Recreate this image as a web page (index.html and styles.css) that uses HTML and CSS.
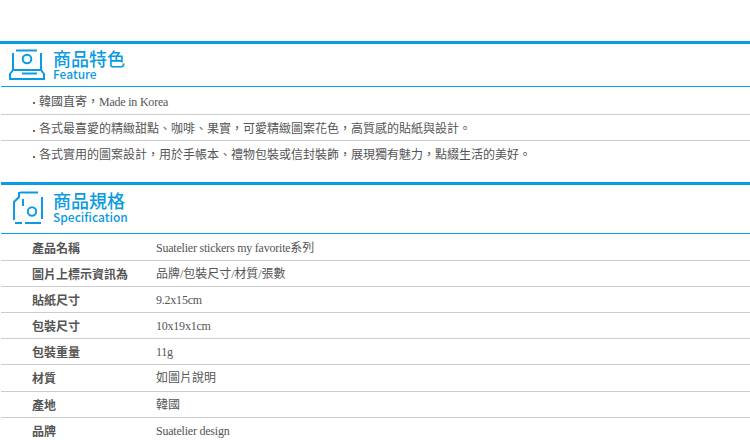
FILE: index.html
```html
<!DOCTYPE html>
<html lang="zh-Hant">
<head>
<meta charset="utf-8">
<title>商品特色</title>
<link rel="stylesheet" href="styles.css">
</head>
<body>
<section class="section feature">
  <header class="head">
    <svg class="icon" width="38" height="36" viewBox="0 0 38 36" fill="none" stroke="#0a9be0" stroke-width="2">
      <path d="M8 3.500H29M5 6V23M33 6V23M5 23H33M14 26.500H29"/>
      <circle cx="19" cy="12" r="4.300"/>
      <path d="M5 23L2 27V32H36V27L33 23"/>
    </svg>
    <div class="titles">
      <h2>商品特色</h2>
      <p>Feature</p>
    </div>
  </header>
  <ul class="points">
    <li>韓國直寄，<span class="lat">Made in Korea</span></li>
    <li>各式最喜愛的精緻甜點、咖啡、果實，可愛精緻圖案花色，高質感的貼紙與設計。</li>
    <li>各式實用的圖案設計，用於手帳本、禮物包裝或信封裝飾，展現獨有魅力，點綴生活的美好。</li>
  </ul>
</section>
<section class="section spec">
  <header class="head">
    <svg class="icon" width="36" height="38" viewBox="0 0 36 38" fill="none" stroke="#0a9be0" stroke-width="2">
      <path d="M10 3.500H28M9 3V8L4 13V31M13 10V17M32 8V30M5 34H12M15 34H31"/>
      <circle cx="22" cy="22.500" r="4.200"/>
    </svg>
    <div class="titles">
      <h2>商品規格</h2>
      <p>Specification</p>
    </div>
  </header>
  <dl class="specs">
    <div class="row"><dt>產品名稱</dt><dd><span class="lat">Suatelier stickers my favorite</span>系列</dd></div>
    <div class="row"><dt>圖片上標示資訊為</dt><dd>品牌<span class="lat">/</span>包裝尺寸<span class="lat">/</span>材質<span class="lat">/</span>張數</dd></div>
    <div class="row"><dt>貼紙尺寸</dt><dd><span class="lat">9.2x15cm</span></dd></div>
    <div class="row"><dt>包裝尺寸</dt><dd><span class="lat">10x19x1cm</span></dd></div>
    <div class="row"><dt>包裝重量</dt><dd><span class="lat">11g</span></dd></div>
    <div class="row"><dt>材質</dt><dd>如圖片說明</dd></div>
    <div class="row"><dt>產地</dt><dd>韓國</dd></div>
    <div class="row"><dt>品牌</dt><dd><span class="lat">Suatelier design</span></dd></div>
  </dl>
</section>
</body>
</html>
```
FILE: styles.css
```css
html, body {
  margin: 0;
  padding: 0;
  background: #fff;
  overflow: hidden;
}
body {
  width: 750px;
  height: 447px;
  padding-top: 41px;
  box-sizing: border-box;
  font-family: "Liberation Serif", "Noto Sans CJK TC", serif;
  font-size: 12px;
  color: #555;
}
.feature {
  border-top: 3px solid #0a9be0;
}
.spec {
  border-top: 3px solid #0a9be0;
  margin-top: 14px;
  margin-left: 1px;
}
.head {
  display: flex;
  align-items: flex-start;
  height: 42px;
  border-bottom: 1px solid #0aa0e6;
}
.feature .head {
  margin-left: 1px;
  padding-left: 7px;
}
.spec .head {
  height: 48px;
  padding-left: 9px;
}
.icon {
  flex: none;
}
.feature .icon {
  margin-top: 3px;
}
.spec .icon {
  margin-top: 4px;
}
.titles {
  margin-left: 7px;
  padding-top: 5px;
  font-family: "Noto Sans CJK TC", "Noto Sans", sans-serif;
  color: #0a9be0;
}
.spec .titles {
  padding-top: 6px;
}
.titles h2 {
  margin: 0;
  font-size: 18px;
  line-height: 18px;
  font-weight: 500;
}
.titles p {
  margin: 0;
  font-size: 12px;
  line-height: 13px;
  font-weight: 500;
}
.spec .titles p {
  margin-top: 1px;
}
.points {
  list-style: none;
  margin: 0 0 0 1px;
  padding: 0;
}
.points li {
  height: 27px;
  line-height: 25px;
  padding-top: 2px;
  box-sizing: border-box;
  padding-left: 38px;
  position: relative;
}
.points li:first-child {
  height: 28px;
  line-height: 26px;
}
.points li:not(:last-child) {
  border-bottom: 1px solid #ccc;
}
.points li:nth-child(2) {
  height: 26px;
  line-height: 24px;
}
.points li::before {
  content: "";
  position: absolute;
  left: 32px;
  top: 15px;
  width: 2px;
  height: 2px;
  background: #666;
}
.lat {
  letter-spacing: -0.22px;
}
.specs {
  margin: 0;
}
.row {
  display: flex;
  height: 26px;
  line-height: 24px;
  padding-top: 1px;
  box-sizing: border-box;
  border-bottom: 1px solid #ccc;
}
.row:first-child,
.row:nth-child(6) {
  height: 27px;
}
.row:first-child {
  padding-top: 2px;
}
.row:last-child {
  border-bottom: 0;
}
.row dt {
  width: 155px;
  box-sizing: border-box;
  padding-left: 31px;
  font-family: "Noto Sans CJK TC", sans-serif;
  font-weight: 700;
  color: #555;
}
.row dd {
  margin: 0;
}
```
